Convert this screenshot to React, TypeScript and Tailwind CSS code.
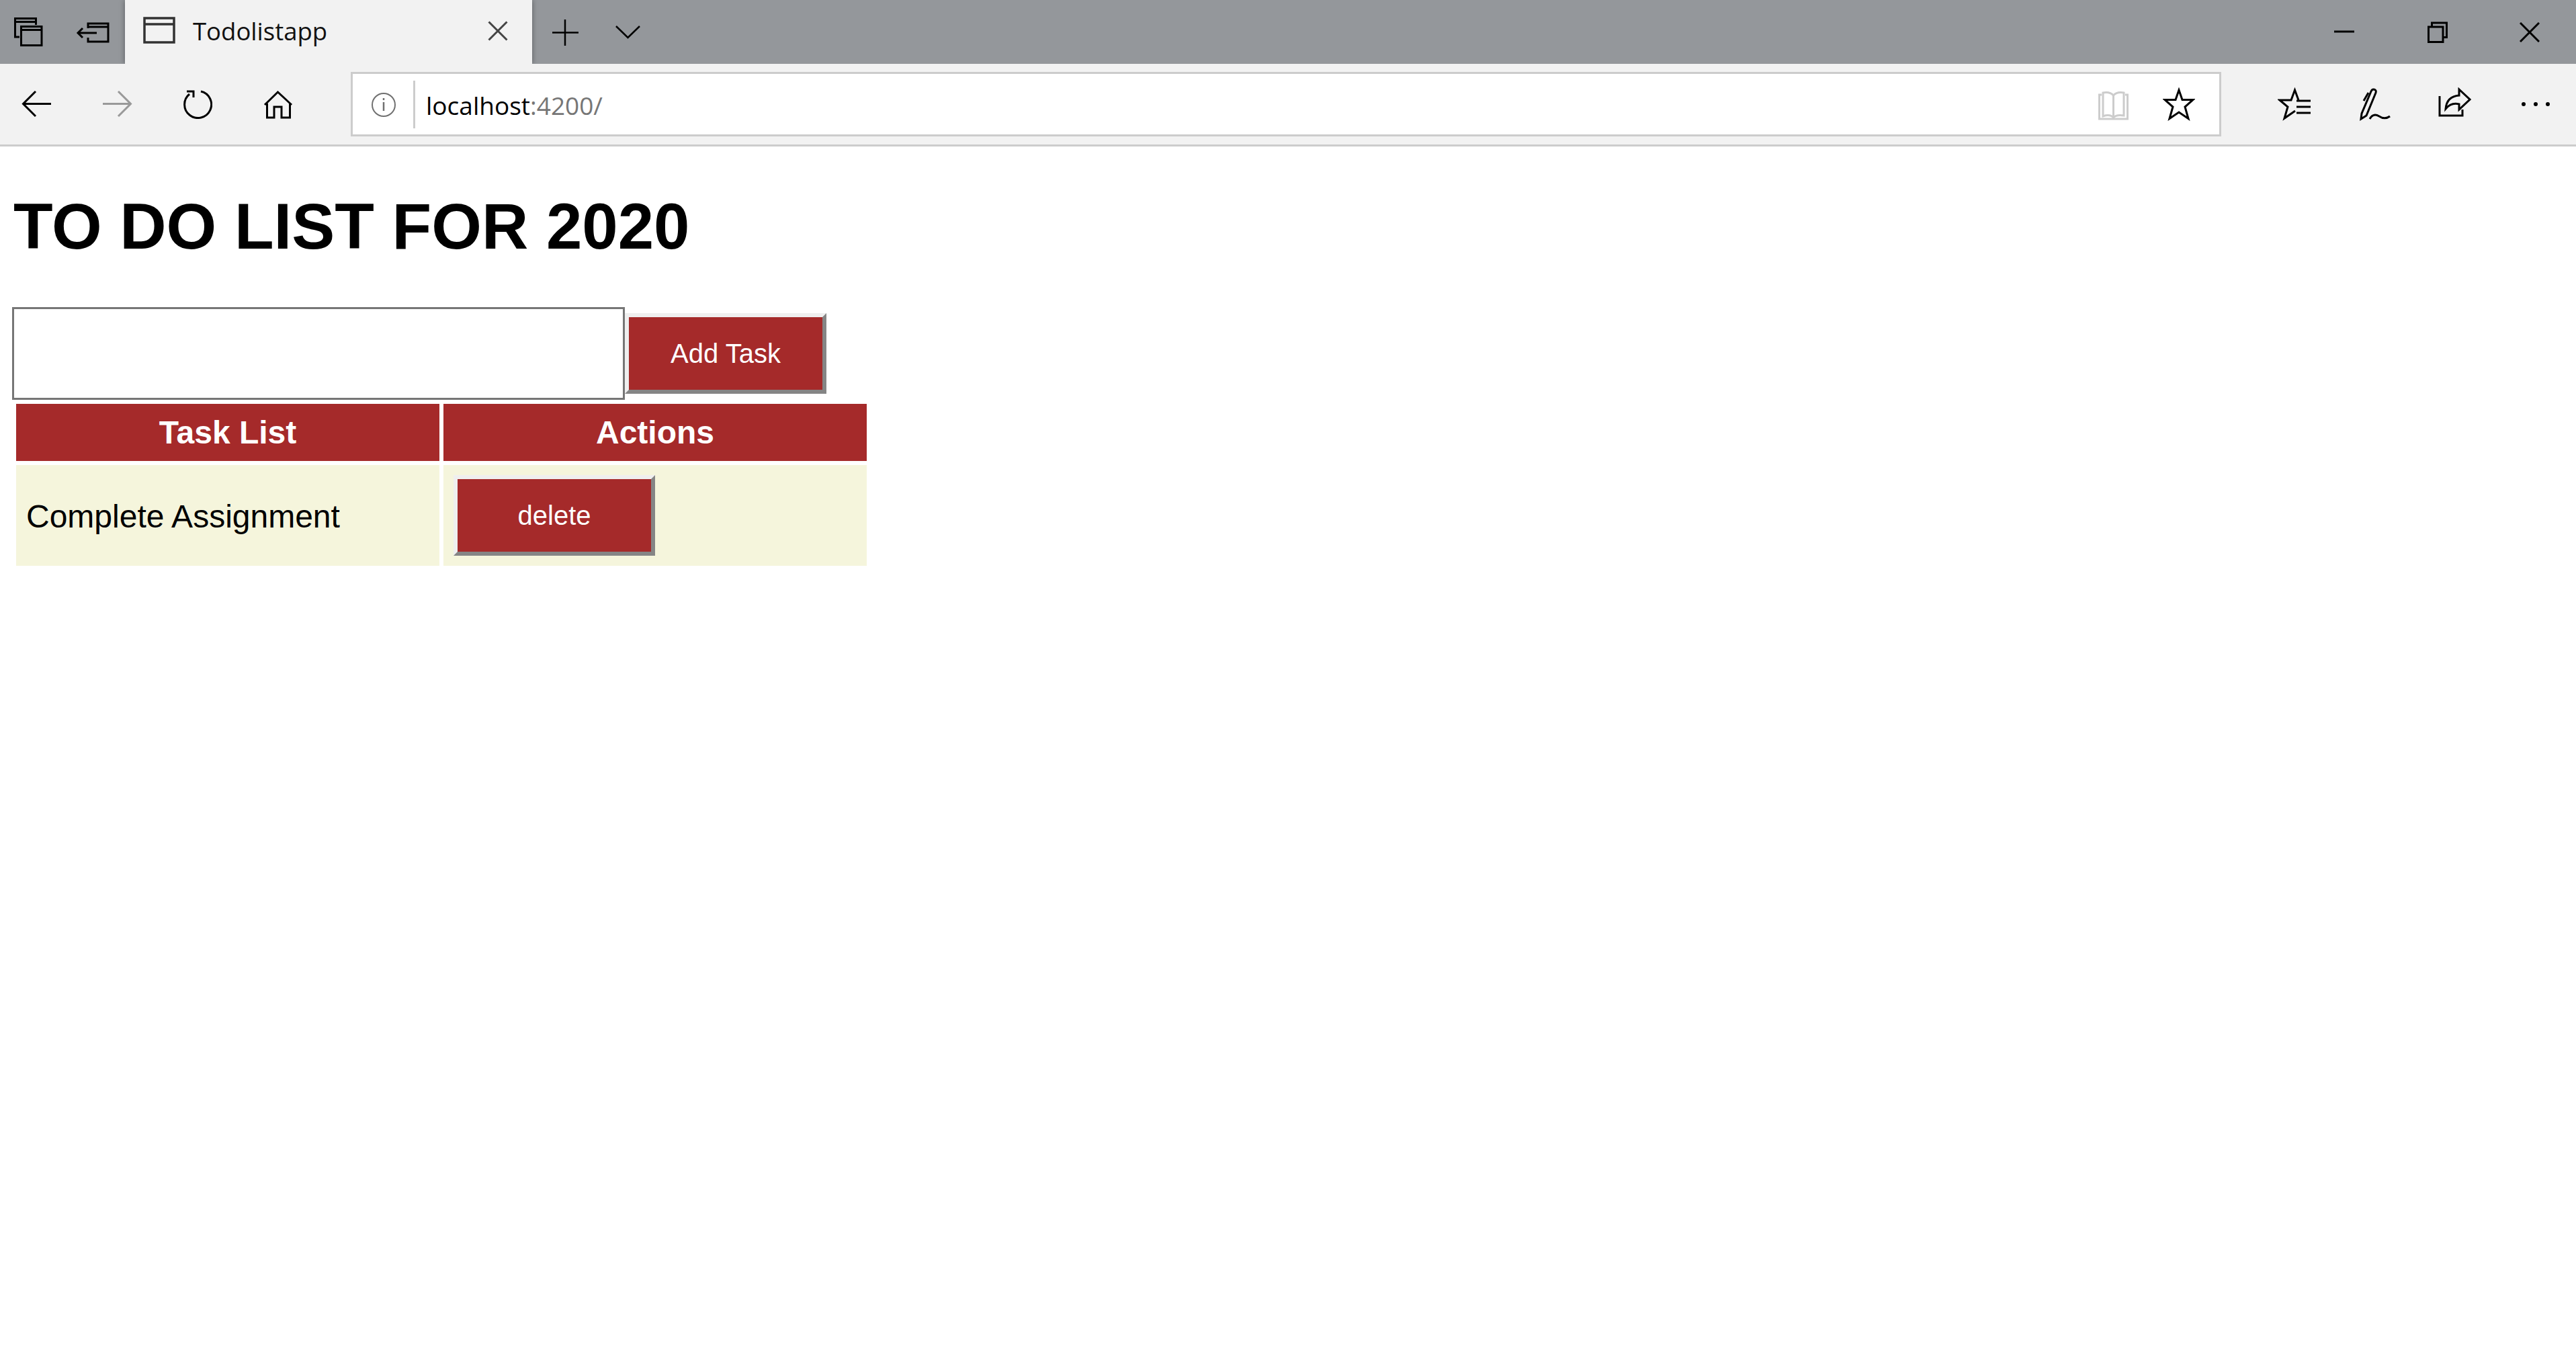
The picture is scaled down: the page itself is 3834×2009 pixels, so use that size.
import type { ReactNode } from 'react'

function Icon({ w, h, className, children }: { w: number; h: number; className?: string; children: ReactNode }) {
  return (
    <svg width={w} height={h} viewBox={`0 0 ${w} ${h}`} fill="none" stroke="currentColor" className={className}>
      {children}
    </svg>
  )
}

function TitleBar() {
  return (
    <div className="flex h-[95px] items-stretch bg-[#94979b] text-black">
      <div className="flex w-[186px] items-center">
        <Icon w={45} h={45} className="ml-[20px] shrink-0">
          <g strokeWidth={3}>
            <path d="M9 30 H2.5 V2.5 H33.5 V12" />
            <path d="M2.5 7.5 H33.5" />
            <rect x="11.5" y="14.5" width="30.5" height="28" />
            <path d="M11.5 19.5 H42" />
          </g>
        </Icon>
        <Icon w={50} h={32} className="ml-[48px] mt-[3px] shrink-0">
          <g strokeWidth={3}>
            <path d="M18 9 V2 H48 V29 H18 V23" />
            <path d="M18 7 H48" />
            <path d="M3 16 H31" />
            <path d="M10 9 L3 16 L10 23" />
          </g>
        </Icon>
      </div>
      <div className="relative flex w-[606px] items-center bg-[#f2f2f2] shadow-[0_0_8px_rgba(0,0,0,0.4)]">
        <Icon w={48} h={40} className="ml-[27px] mt-[-5px] shrink-0 text-[#333]">
          <g strokeWidth={3.5}>
            <rect x="2" y="2" width="44" height="36" />
            <path d="M2 11 H46" />
          </g>
        </Icon>
        <span className="ml-[26px] mt-[-2px] font-['Open_Sans'] text-[36.5px] leading-none text-[#111]">Todolistapp</span>
        <Icon w={30} h={30} className="ml-auto mr-[36px] mt-[-3px] shrink-0 text-[#444]">
          <path d="M1.5 1.5 L28.5 28.5 M28.5 1.5 L1.5 28.5" strokeWidth={3} />
        </Icon>
      </div>
      <div className="flex flex-1 items-center">
        <Icon w={40} h={40} className="ml-[29px] mt-[3px]">
          <path d="M1 19.5 H40 M20 0 V39" strokeWidth={2.5} />
        </Icon>
        <Icon w={40} h={22} className="ml-[54px]">
          <path d="M2 2 L19.5 19 L37 2" strokeWidth={2.5} />
        </Icon>
        <Icon w={32} h={4} className="ml-auto mt-[-1px]">
          <path d="M1 2 H31" strokeWidth={3} />
        </Icon>
        <Icon w={32} h={32} className="ml-[107px]">
          <g strokeWidth={3}>
            <rect x="2.5" y="8" width="21.5" height="22.5" />
            <path d="M7.5 8 V2 H29.5 V23.5 H24" />
          </g>
        </Icon>
        <Icon w={30} h={30} className="ml-[106px] mr-[54px]">
          <path d="M1 1 L29 29 M29 1 L1 29" strokeWidth={3} />
        </Icon>
      </div>
    </div>
  )
}

function Toolbar() {
  return (
    <div className="relative z-10 flex h-[123px] items-center border-b-[3px] border-[#cccccc] bg-[#f2f2f2] text-black">
      <Icon w={46} h={42} className="ml-[32px] shrink-0">
        <path d="M44 20.5 H3 M21 2 L2.5 20.5 L21 39" strokeWidth={3} />
      </Icon>
      <Icon w={46} h={42} className="ml-[73px] shrink-0 text-[#999]">
        <path d="M2 20.5 H43 M25 2 L43.5 20.5 L25 39" strokeWidth={3} />
      </Icon>
      <Icon w={44} h={44} className="ml-[75px] shrink-0">
        <path d="M27 3 A20 20 0 1 1 10 7" strokeWidth={3} />
        <path d="M6 3 H16 V12" strokeWidth={3} />
      </Icon>
      <Icon w={46} h={44} className="ml-[75px] mt-[2px] shrink-0">
        <g strokeWidth={3}>
          <path d="M3 22 L22.5 3 L43 22" />
          <path d="M6.5 20 V41 H17 V25 H28 V41 H40.5 V20" />
        </g>
      </Icon>
      <div className="ml-[85px] flex h-[96px] w-[2784px] items-center border-[3px] border-[#cccccc] bg-white">
        <Icon w={38} h={38} className="ml-[27px] mt-[2px] shrink-0 text-[#707070]">
          <circle cx="19" cy="19" r="17" strokeWidth={2} />
          <path d="M19 15 V28" strokeWidth={2.5} />
          <path d="M19 9 V12" strokeWidth={2.5} />
        </Icon>
        <div className="ml-[25px] h-[71px] w-[3px] bg-[#cccccc]" />
        <span className="ml-[16px] mt-[2px] font-['Open_Sans'] text-[37px] leading-none text-black">
          localhost<span className="text-[#767676]">:4200/</span>
        </span>
        <Icon w={48} h={44} className="ml-auto mt-[6px] shrink-0 text-[#cccccc]">
          <g strokeWidth={3}>
            <path d="M6 5 H2.5 V41 H44.5 V5 H41" />
            <path d="M8 37 V2 C14 1 20 2 23.5 6 C27 2 33 1 39 2 V36 C33 35 27 35 23.5 39 C20 35 14 35 8 37 Z" />
            <path d="M23.5 6 V39" />
          </g>
        </Icon>
        <Icon w={48} h={50} className="ml-[49px] mr-[36px] shrink-0">
          <path d="M24 4 L29 18.5 L45 18.5 L33 29 L38 46.5 L24 37 L10 46.5 L15 29 L3 18.5 L19 18.5 Z" strokeWidth={3} />
        </Icon>
      </div>
      <Icon w={50} h={50} className="ml-[84px] shrink-0">
        <path d="M31 19 L25.5 4 L20 19 L3 19 L15 29 L10 46 L26 35" strokeWidth={3} />
        <path d="M28 20 H49 M28 29 H49 M28 38 H49" strokeWidth={3} />
      </Icon>
      <Icon w={50} h={50} className="ml-[70px] shrink-0">
        <g strokeWidth={3}>
          <path d="M4 47 L5 39 L19 6 C21 1 28 3 26 8 L12 42 Z" />
          <path d="M15 8 L8 20" />
          <path d="M17 47 C21 40 26 40 31 43 C37 47 43 46 47 43" />
        </g>
      </Icon>
      <Icon w={50} h={50} className="ml-[68px] shrink-0">
        <g strokeWidth={3}>
          <path d="M3 13 V42 H37 V33" />
          <path d="M32 3 L48 18 L32 33 V25 C24 23 17 26 12 32 C13 20 20 13 32 12 Z" />
        </g>
      </Icon>
      <div className="ml-[75px] flex gap-[12px]">
        <span className="size-[6px] rounded-full bg-black" />
        <span className="size-[6px] rounded-full bg-black" />
        <span className="size-[6px] rounded-full bg-black" />
      </div>
    </div>
  )
}

const btn =
  'w-[300px] h-[120px] bg-[#a52a2a] border-[6px] border-solid border-t-[#efefef] border-l-[#efefef] border-r-[#858585] border-b-[#858585] text-white text-[40px] font-normal'

export default function App() {
  return (
    <div className="min-h-[2009px] bg-white font-['Liberation_Sans'] text-black">
      <TitleBar />
      <Toolbar />
      <main className="px-[18px]">
        <h1 className="mb-[65px] ml-[2px] mt-[64px] text-[96px] font-bold leading-[110px]">TO DO LIST FOR 2020</h1>
        <div className="flex items-center">
          <input className="h-[138px] w-[912px] border-[3px] border-[#767676] bg-white outline-none" />
          <button className={btn}>Add Task</button>
        </div>
        <table className="border-separate border-spacing-[6px] text-[48px]">
          <thead>
            <tr>
              <th className="h-[85px] w-[630px] bg-[#a52a2a] p-0 text-center font-bold text-white">Task List</th>
              <th className="h-[85px] w-[630px] bg-[#a52a2a] p-0 text-center font-bold text-white">Actions</th>
            </tr>
          </thead>
          <tbody>
            <tr>
              <td className="h-[150px] bg-[#f5f5dc] px-[15px] pb-0 pt-[3px]">Complete Assignment</td>
              <td className="h-[150px] bg-[#f5f5dc] px-[15px] py-0 align-middle">
                <button className={btn + ' block'}>delete</button>
              </td>
            </tr>
          </tbody>
        </table>
      </main>
    </div>
  )
}
